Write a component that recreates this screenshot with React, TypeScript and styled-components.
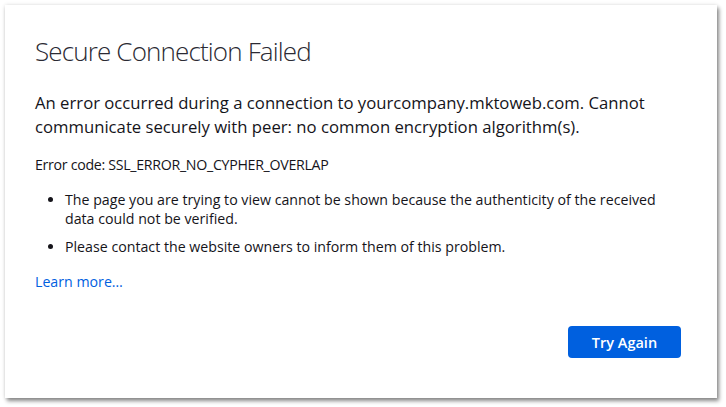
import React from "react";
import styled, { createGlobalStyle } from "styled-components";

const Global = createGlobalStyle`
  html, body { margin: 0; padding: 0; background: #ffffff; }
  body { font-family: "Open Sans", "Noto Sans", sans-serif; color: #15141a; }
`;

const Page = styled.div`
  width: 726px;
  height: 407px;
  padding: 5px 0 0 5px;
  box-sizing: border-box;
`;

const Card = styled.div`
  width: 712px;
  height: 393px;
  box-sizing: border-box;
  background: #ffffff;
  padding: 28px 36px 0 30px;
  box-shadow: 2px 3px 4px rgba(0, 0, 0, 0.45), 0 0 4px rgba(0, 0, 0, 0.12);
  display: flex;
  flex-direction: column;
  align-items: flex-start;
`;

const Title = styled.h1`
  margin: 0;
  font-size: 26px;
  font-weight: 300;
  line-height: 36px;
  letter-spacing: -0.85px;
  color: #2b2a33;
`;

const Lead = styled.p`
  margin: 22px 0 0 0;
  font-size: 16.7px;
  line-height: 24px;
`;

const Code = styled.p`
  margin: 16px 0 0 0;
  font-size: 14.2px;
  line-height: 20px;
  letter-spacing: -0.3px;
`;

const List = styled.ul`
  margin: 15px 0 0 0;
  padding-left: 30px;
  font-size: 14.2px;
  line-height: 19px;
`;

const Item = styled.li`
  margin-bottom: 9px;
`;

const LearnMore = styled.a`
  margin-top: 7px;
  font-size: 14.2px;
  line-height: 20px;
  color: #0060df;
  text-decoration: none;
`;

const Actions = styled.div`
  align-self: stretch;
  display: flex;
  justify-content: flex-end;
  margin-top: 34px;
`;

const Button = styled.button`
  width: 113px;
  height: 32px;
  border: none;
  border-radius: 4px;
  background: #0060df;
  color: #ffffff;
  font-family: "Open Sans", "Noto Sans", sans-serif;
  font-size: 14.5px;
  font-weight: 600;
`;

export default function App() {
  return (
    <Page>
      <Global />
      <Card>
        <Title>Secure Connection Failed</Title>
        <Lead>
          An error occurred during a connection to yourcompany.mktoweb.com. Cannot communicate securely with peer: no common encryption algorithm(s).
        </Lead>
        <Code>Error code: SSL_ERROR_NO_CYPHER_OVERLAP</Code>
        <List>
          <Item>The page you are trying to view cannot be shown because the authenticity of the received data could not be verified.</Item>
          <Item>Please contact the website owners to inform them of this problem.</Item>
        </List>
        <LearnMore href="#">Learn more…</LearnMore>
        <Actions>
          <Button>Try Again</Button>
        </Actions>
      </Card>
    </Page>
  );
}
